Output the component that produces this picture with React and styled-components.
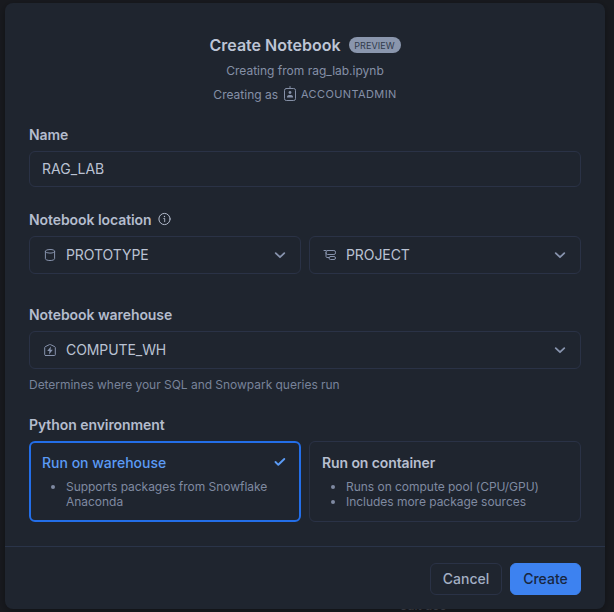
import React from 'react';
import styled, { createGlobalStyle, css } from 'styled-components';

const Global = createGlobalStyle`
  * { box-sizing: border-box; }
  html, body { margin: 0; height: 612px; overflow: hidden; background: #191b20; }
  body { font-family: Inter, "Liberation Sans", sans-serif; }
`;
const Page = styled.main`
  position: relative;
  height: 612px;
  padding: 3px 9px 4px 5px;
  overflow: hidden;
`;
const Behind = styled.div`
  position: absolute;
  left: 400px;
  top: 598px;
  font-size: 12px;
  line-height: 15px;
  font-weight: 500;
  color: #45474f;
`;
const Dialog = styled.section`
  position: relative;
  display: flex;
  flex-direction: column;
  width: 600px;
  height: 606px;
  border-radius: 8px;
  background: #1f252f;
  box-shadow: 0 2px 10px rgba(0, 0, 0, 0.35);
`;
const Header = styled.header`
  display: flex;
  flex-direction: column;
  align-items: center;
  height: 119px;
  padding-top: 30px;
`;
const TitleRow = styled.div`
  display: flex;
  align-items: center;
  gap: 8px;
  height: 24px;
  margin-bottom: 1px;
`;
const Title = styled.h1`
  margin: 0;
  font-size: 16px;
  line-height: 24px;
  font-weight: 600;
  color: #bdc4d5;
`;
const Badge = styled.span`
  width: 52px;
  height: 16px;
  border-radius: 8px;
  background: #8a96ad;
  color: #303a4b;
  font-size: 9px;
  line-height: 17px;
  letter-spacing: 0.1px;
  text-align: center;
`;
const Meta = styled.div`
  display: flex;
  align-items: center;
  height: 24px;
  font-size: 12px;
  color: #8590a7;
  & svg { margin: 0 3px 0 4px; }
`;
const Role = styled.span`
  font-size: 11px;
  letter-spacing: 0.38px;
`;
const Body = styled.div`
  display: flex;
  flex-direction: column;
  height: 424px;
  padding: 0 24px;
`;
const Label = styled.div`
  display: flex;
  align-items: center;
  gap: 6px;
  height: 24px;
  margin-bottom: 5px;
  font-size: 14px;
  font-weight: 600;
  letter-spacing: -0.07px;
  color: #b4bccd;
`;
const Field = styled.div`
  margin-bottom: ${p => p.$gap}px;
`;
const Columns = styled.div`
  display: grid;
  grid-template-columns: 272px 272px;
  gap: 8px;
`;
const box = css`
  border: 1px solid #2a3246;
  border-radius: 6px;
`;
const Input = styled.div`
  ${box}
  height: 36px;
  padding-left: 12px;
  font-size: 14px;
  line-height: 34px;
  color: #bac2d3;
`;
const SelectBox = styled.div`
  ${box}
  display: flex;
  align-items: center;
  height: 38px;
  padding: 0 13px 0 12px;
  color: #8793ad;
`;
const Value = styled.span`
  flex: 1;
  margin-left: 8px;
  font-size: 14px;
  line-height: 18px;
  padding-bottom: 1px;
  letter-spacing: -0.08px;
  color: #bac2d3;
`;
const Hint = styled.div`
  height: 20px;
  margin-top: 6px;
  font-size: 12px;
  line-height: 20px;
  letter-spacing: -0.03px;
  color: #78839a;
`;
const Option = styled.div`
  height: 81px;
  padding: ${p => (p.$selected ? '9px 11px' : '10px 12px')};
  border: ${p => (p.$selected ? '2px solid #236ee8' : '1px solid #2a3246')};
  border-radius: 6px;
`;
const OptionHead = styled.div`
  display: flex;
  justify-content: space-between;
  align-items: center;
  height: 20px;
  padding-right: 1px;
  font-size: 14px;
  font-weight: ${p => (p.$selected ? 500 : 600)};
  letter-spacing: ${p => (p.$selected ? '0' : '-0.1px')};
  color: ${p => (p.$selected ? '#5b9bf5' : '#b7bfd0')};
`;
const List = styled.ul`
  margin: 7px 0 0;
  padding-left: 24px;
  font-size: 12px;
  line-height: 15px;
  letter-spacing: -0.03px;
  color: #7f8aa1;
`;
const Footer = styled.footer`
  display: flex;
  justify-content: flex-end;
  gap: 8px;
  height: 63px;
  padding: 16px 24px 0;
  border-top: 1px solid #2a3449;
`;
const Button = styled.button`
  width: ${p => (p.$primary ? 71 : 72)}px;
  height: 32px;
  padding: 0 0 2px;
  border: 1px solid ${p => (p.$primary ? '#3d82f0' : '#2a3246')};
  border-radius: 6px;
  background: ${p => (p.$primary ? '#3d82f0' : 'transparent')};
  color: ${p => (p.$primary ? '#18263e' : '#a3afc3')};
  font: 500 14px Inter, sans-serif;
`;

const Icon = ({ size = 16, children }) => (
  <svg width={size} height={size} viewBox={`0 0 ${size} ${size}`} fill="none" stroke="currentColor" strokeLinecap="round" strokeLinejoin="round">
    {children}
  </svg>
);
const RoleIcon = () => (
  <Icon>
    <rect x="2.5" y="2.5" width="11" height="12" rx="1.8" />
    <path d="M8 .5v2" />
    <circle cx="8" cy="6.5" r="1.4" fill="currentColor" stroke="none" />
    <path d="M5 11.5v-.7C5 9.5 6 9 8 9s3 .5 3 1.8v.7z" fill="currentColor" stroke="none" />
  </Icon>
);
const InfoIcon = () => (
  <Icon size={14}>
    <circle cx="6.5" cy="7" r="5.6" />
    <path d="M5.8 6.5h.9v3.2" strokeWidth=".9" />
    <circle cx="6.5" cy="4.5" r=".65" fill="currentColor" stroke="none" />
  </Icon>
);
const DatabaseIcon = () => (
  <Icon>
    <ellipse cx="8" cy="4.3" rx="4.6" ry="1.8" />
    <path d="M3.4 4.3v7.4c0 1 2 1.8 4.6 1.8s4.6-.8 4.6-1.8V4.3" />
  </Icon>
);
const SchemaIcon = () => (
  <Icon>
    <path d="M2 3.5h2M4 5.5v4c0 .6.4 1 1 1h2" />
    <rect x="4" y="3.5" width="9.5" height="4" rx="1.6" />
    <rect x="7" y="9.5" width="6.5" height="3" rx="1.5" />
  </Icon>
);
const WarehouseIcon = () => (
  <Icon>
    <path d="M3.5 13.5h9q.8 0 .8-.8V5.6q0-.6-.5-.9L8.5 2.6q-.5-.2-1 0L3.2 4.7q-.5.3-.5.9v7.1q0 .8.8.8z" />
    <path d="M9 4.6 5.2 9h2.2L7 12.4l3.8-4.7H8.5z" fill="currentColor" stroke="none" />
  </Icon>
);
const Chevron = () => (
  <Icon size={14}><path d="M2.7 5.1 7 9.2l4.3-4.1" strokeWidth="1.8" /></Icon>
);
const Check = () => (
  <Icon size={14}><path d="m2.5 7 2.8 2.8 6-5.8" strokeWidth="1.9" /></Icon>
);
const Select = ({ icon, children }) => (
  <SelectBox>{icon}<Value>{children}</Value><Chevron /></SelectBox>
);

export default function App() {
  return (
    <Page>
      <Global />
      <Behind>edit doc</Behind>
      <Dialog>
        <Header>
          <TitleRow><Title>Create Notebook</Title><Badge>PREVIEW</Badge></TitleRow>
          <Meta>Creating from rag_lab.ipynb</Meta>
          <Meta>Creating as<RoleIcon /><Role>ACCOUNTADMIN</Role></Meta>
        </Header>
        <Body>
          <Field $gap={20}>
            <Label>Name</Label>
            <Input>RAG_LAB</Input>
          </Field>
          <Field $gap={28}>
            <Label>Notebook location<InfoIcon /></Label>
            <Columns>
              <Select icon={<DatabaseIcon />}>PROTOTYPE</Select>
              <Select icon={<SchemaIcon />}>PROJECT</Select>
            </Columns>
          </Field>
          <Field $gap={17}>
            <Label>Notebook warehouse</Label>
            <Select icon={<WarehouseIcon />}>COMPUTE_WH</Select>
            <Hint>Determines where your SQL and Snowpark queries run</Hint>
          </Field>
          <Field $gap={0}>
            <Label>Python environment</Label>
            <Columns>
              <Option $selected>
                <OptionHead $selected>Run on warehouse<Check /></OptionHead>
                <List><li>Supports packages from Snowflake Anaconda</li></List>
              </Option>
              <Option>
                <OptionHead>Run on container</OptionHead>
                <List><li>Runs on compute pool (CPU/GPU)</li><li>Includes more package sources</li></List>
              </Option>
            </Columns>
          </Field>
        </Body>
        <Footer>
          <Button>Cancel</Button>
          <Button $primary>Create</Button>
        </Footer>
      </Dialog>
    </Page>
  );
}
